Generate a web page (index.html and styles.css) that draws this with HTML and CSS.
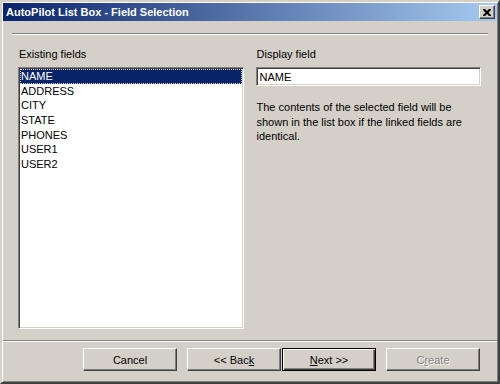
FILE: index.html
```html
<!DOCTYPE html>
<html lang="en">
<head>
    <meta charset="UTF-8">
    <title>AutoPilot List Box - Field Selection</title>
    <link rel="stylesheet" href="styles.css">
</head>
<body>
    <div class="window">
        <div class="titlebar">
            <span class="title">AutoPilot List Box - Field Selection</span>
            <span class="close">
                <svg width="8" height="7" viewBox="0 0 8 7">
                    <path d="M0 0h2l2 2 2-2h2v1L5.5 3.5 8 6v1H6L4 5 2 7H0V6l2.5-2.5L0 1z" fill="#000"/>
                </svg>
            </span>
        </div>

        <div class="content">
            <div class="rule"></div>
            <div class="columns">
                <div class="col">
                    <div class="label">Existing fields</div>
                    <div class="listbox">
                        <div class="item selected"><span>NAME</span></div>
                        <div class="item"><span>ADDRESS</span></div>
                        <div class="item"><span>CITY</span></div>
                        <div class="item"><span>STATE</span></div>
                        <div class="item"><span>PHONES</span></div>
                        <div class="item"><span>USER1</span></div>
                        <div class="item"><span>USER2</span></div>
                    </div>
                </div>
                <div class="col">
                    <div class="label">Display field</div>
                    <div class="textbox">NAME</div>
                    <p class="hint">The contents of the selected field will be<br>shown in the list box if the linked fields are<br>identical.</p>
                </div>
            </div>
        </div>

        <div class="footer">
            <div class="rule"></div>
            <div class="buttons">
                <button class="btn">Cancel</button>
                <button class="btn back">&lt;&lt; Bac<u>k</u></button>
                <button class="btn default"><u>N</u>ext &gt;&gt;</button>
                <button class="btn disabled" disabled>C<u>r</u>eate</button>
            </div>
        </div>
    </div>
</body>
</html>
```

FILE: styles.css
```css
body {
    margin: 0;
    font-family: "Liberation Sans", Arial, sans-serif;
    font-size: 11px;
    color: #000;
}
.window {
    width: 500px;
    height: 384px;
    box-sizing: border-box;
    display: flex;
    flex-direction: column;
    background-color: #d4d0c8;
    padding: 1px;
    border: 2px solid;
    border-color: #d4d0c8 #404040 #404040 #d4d0c8;
    box-shadow: inset 1px 1px #fff, inset -1px -1px #808080;
}
.titlebar {
    height: 18px;
    display: flex;
    align-items: center;
    justify-content: space-between;
    padding: 0 2px 0 3px;
    background: linear-gradient(to right, #0a246a, #a6caf0);
}
.title {
    color: #fff;
    font-weight: bold;
    font-size: 11px;
}
.close {
    width: 14px;
    height: 12px;
    display: flex;
    align-items: center;
    justify-content: center;
    background-color: #d4d0c8;
    border: 1px solid;
    border-color: #fff #404040 #404040 #fff;
    box-shadow: inset -1px -1px #808080;
}
.content {
    flex: 1;
    padding: 0 9px;
}
.rule {
    border-top: 1px solid #808080;
    border-bottom: 1px solid #fff;
}
.content .rule {
    margin-top: 12px;
}
.columns {
    display: grid;
    grid-template-columns: 1fr 1fr;
    gap: 12px;
    padding: 0 7px 0 6px;
}
.label {
    line-height: 14px;
    margin-top: 12px;
    margin-bottom: 6px;
    padding-left: 1px;
}
.listbox {
    height: 262px;
    box-sizing: border-box;
    background-color: #fff;
    border: 1px solid;
    border-color: #808080 #fff #fff #808080;
    box-shadow: inset 1px 1px #404040, inset -1px -1px #d4d0c8;
    padding: 1px;
}
.item {
    height: 14.7px;
    line-height: 14.7px;
    padding-left: 1px;
}
.item.selected {
    background-color: #0a246a;
    color: #fff;
    outline: 1px dotted #d4d0c8;
    outline-offset: -1px;
}
.textbox {
    height: 19px;
    box-sizing: border-box;
    line-height: 15px;
    padding: 2px 3px;
    background-color: #fff;
    border: 1px solid;
    border-color: #808080 #fff #fff #808080;
    box-shadow: inset 1px 1px #404040, inset -1px -1px #d4d0c8;
}
.hint {
    margin: 14px 0 0;
    line-height: 14.5px;
    padding-left: 1px;
}
.footer {
    height: 41px;
}
.buttons {
    display: flex;
    justify-content: flex-end;
    gap: 10px;
    margin-top: 6px;
    padding-right: 17px;
}
.btn {
    width: 94px;
    height: 23px;
    box-sizing: border-box;
    font-family: "Liberation Sans", Arial, sans-serif;
    font-size: 11px;
    color: #000;
    background-color: #d4d0c8;
    border: 1px solid;
    border-color: #fff #404040 #404040 #fff;
    box-shadow: inset -1px -1px #808080;
    padding: 0;
}
.btn.back {
    margin-right: -9px;
}
.btn.default {
    border-color: #000;
    box-shadow: inset 1px 1px #fff, inset -1px -1px #404040, inset -2px -2px #808080;
}
.btn.disabled {
    color: #808080;
    text-shadow: 1px 1px #fff;
}
```
